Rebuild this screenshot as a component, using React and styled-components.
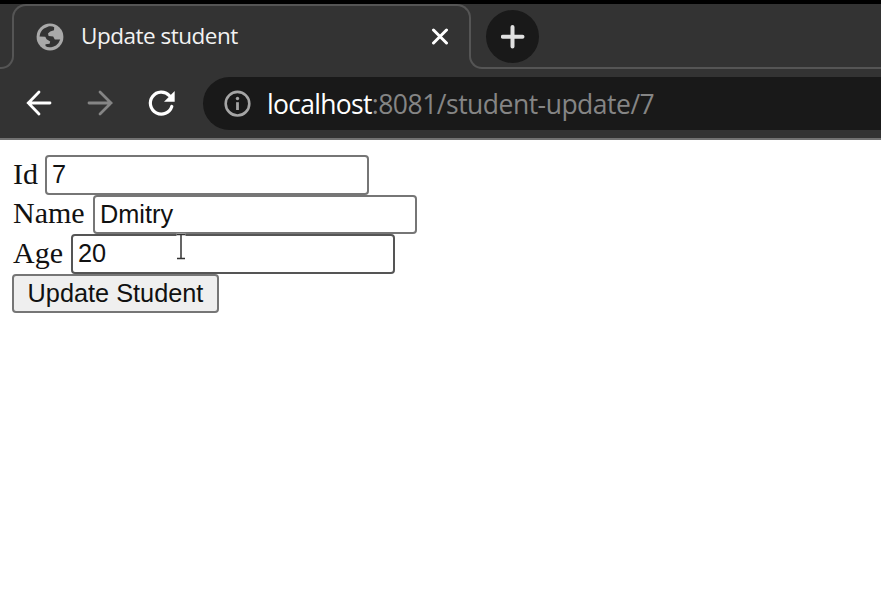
import React from "react";
import styled, { createGlobalStyle } from "styled-components";

const Global = createGlobalStyle`
  body { margin: 0; background: #fff; overflow: hidden; }
  * { box-sizing: border-box; }
`;
const Window = styled.div`
  height: 609px;
  overflow: hidden;
  border-top: 4px solid #000;
  background: #fff;
`;
const Chrome = styled.header`
  height: 136px;
  background: #333333;
  border-bottom: 2px solid #727272;
`;
const TabStrip = styled.div`
  display: flex;
  height: 65px;
`;
const StripEdge = styled.div`
  align-self: flex-end;
  height: 45px;
  border-bottom: 2px solid #555;
  ${(p) =>
    p.$side === "left"
      ? "width: 14px; border-right: 2px solid #555; border-bottom-right-radius: 13px;"
      : "flex: 1; margin-left: -2px; border-left: 2px solid #555; border-bottom-left-radius: 13px;"}
`;
const Tab = styled.div`
  display: flex;
  width: 459px;
  height: 22px;
  margin-left: -2px;
  padding: 0 20px 0 22px;
  border: 2px solid #555;
  border-bottom: 0;
  border-radius: 14px 14px 0 0;
`;
const TabContent = styled.div`
  display: flex;
  align-items: center;
  flex: 1;
  height: 61px;
`;
const TabTitle = styled.span`
  flex: 1;
  margin: -2px 0 0 17px;
  font: 22.5px/30px "Open Sans", sans-serif;
  letter-spacing: -0.5px;
  color: #f2f2f2;
  white-space: nowrap;
`;
const NewTab = styled.div`
  display: grid;
  place-items: center;
  width: 53px;
  height: 53px;
  margin: -14px 0 0 15px;
  border-radius: 50%;
  background: #191919;
`;
const Toolbar = styled.nav`
  display: flex;
  align-items: center;
  height: 69px;
  padding: 0 0 0 24px;
`;
const NavIcon = styled.svg`
  flex: none;
  width: 30px;
  height: 30px;
  margin: -2px ${(p) => p.$gap}px 0 0;
  color: ${(p) => (p.$dim ? "#858585" : "#fff")};
`;
const Address = styled.div`
  display: flex;
  align-items: center;
  flex: 1;
  height: 53px;
  padding-left: 21px;
  border-radius: 27px 0 0 27px;
  background: #191919;
  font: 26.5px/36px "Open Sans", sans-serif;
  color: #858585;
  white-space: nowrap;
`;
const Host = styled.span`
  margin-left: 16px;
  letter-spacing: -0.7px;
  color: #fff;
`;
const Path = styled.span`
  letter-spacing: -0.5px;
`;
const Form = styled.form`
  position: relative;
  padding: 15px 0 0 12px;
`;
const Row = styled.div`
  display: flex;
  align-items: center;
  height: ${(p) => p.$height}px;
`;
const Label = styled.label`
  width: ${(p) => p.$width}px;
  flex: none;
  font: 30px/34px "Liberation Serif", serif;
  color: #111;
  margin-top: -3px;
  padding-left: 1px;
`;
const Input = styled.input`
  width: 324px;
  height: 100%;
  margin: 0;
  padding: 0 5px ${(p) => (p.$low ? 0 : 2)}px;
  border: 2px solid ${(p) => (p.$hover ? "#555" : "#767676")};
  border-radius: 4px;
  background: #fff;
  outline: 0;
  font: 25.3px/30px "Liberation Sans", sans-serif;
  color: #111;
`;
const Submit = styled.button`
  width: 207px;
  height: 39px;
  padding: 0 0 1px;
  border: 2px solid #767676;
  border-radius: 4px;
  background: #efefef;
  font: 25.3px/30px "Liberation Sans", sans-serif;
  color: #111;
  white-space: nowrap;
`;
const Cursor = styled.svg`
  position: absolute;
  left: 175px;
  top: 93px;
`;

const fields = [
  { name: "Id", value: "7", label: 33, height: 40 },
  { name: "Name", value: "Dmitry", label: 81, height: 39, low: true },
  { name: "Age", value: "20", label: 59, height: 40, hover: true },
];

export default function App() {
  return (
    <Window>
      <Global />
      <Chrome>
        <TabStrip>
          <StripEdge $side="left" />
          <Tab>
            <TabContent>
              <svg width="28" height="28" viewBox="0 0 28 28">
                <circle cx="14" cy="14" r="13.4" fill="#a9a9a9" />
                <path
                  d="M13 3.3 Q16.5 2.8 18.2 4.3 L18 7.2 L14.2 8.6 L12 10.4 L12.6 13 L17.2 13.4 L18.8 16.4 L24.2 16.6 Q23.2 20 20 22.4 L17 23.8 Q12 25.2 9.5 23 L9.5 21.2 L13.6 20.8 L14.2 18.4 L10.6 16.2 L9.3 13.8 L3.6 13.4 Q4 8.4 8 5.5 Z"
                  fill="#333"
                />
              </svg>
              <TabTitle>Update student</TabTitle>
              <svg width="18" height="18" viewBox="0 0 18 18">
                <path d="M2.5 2 L15.5 15 M15.5 2 L2.5 15" stroke="#fff" strokeWidth="3" strokeLinecap="round" />
              </svg>
            </TabContent>
          </Tab>
          <StripEdge $side="right">
            <NewTab>
              <svg width="24" height="24" viewBox="0 0 24 24">
                <path d="M11.5 2V21.5M1.8 11.8H21.5" stroke="#e0e0e0" strokeWidth="4" strokeLinecap="round" />
              </svg>
            </NewTab>
          </StripEdge>
        </TabStrip>
        <Toolbar>
          <NavIcon $gap={31} viewBox="0 0 30 30" fill="none" stroke="currentColor" strokeWidth="2.8" strokeLinecap="round">
            <path d="M26 15H4.3M15 4L4.3 15L15 26" />
          </NavIcon>
          <NavIcon $gap={31} $dim viewBox="0 0 30 30" fill="none" stroke="currentColor" strokeWidth="2.8" strokeLinecap="round">
            <path d="M4 15H26M15 4L26 15L15 26" />
          </NavIcon>
          <NavIcon $gap={27} viewBox="0 0 30 30">
            <path
              d="M25.8 18.5A11 11 0 1 1 23.4 7.6"
              fill="none"
              stroke="currentColor"
              strokeWidth="3.2"
              strokeLinecap="round"
            />
            <path d="M28.7 3V13.8H18Z" fill="currentColor" />
          </NavIcon>
          <Address>
            <svg width="27" height="27" viewBox="0 0 27 27">
              <circle cx="13.5" cy="13.7" r="11.8" fill="none" stroke="#a5a5a5" strokeWidth="2.6" />
              <path d="M13.5 12.2V20" stroke="#a5a5a5" strokeWidth="2.8" />
              <circle cx="13.5" cy="8.5" r="1.7" fill="#a5a5a5" />
            </svg>
            <Host>localhost</Host>
            <Path>:8081/student-update/7</Path>
          </Address>
        </Toolbar>
      </Chrome>
      <Form>
        {fields.map((f) => (
          <Row key={f.name} $height={f.height}>
            <Label $width={f.label} htmlFor={f.name}>{f.name}</Label>
            <Input id={f.name} defaultValue={f.value} $hover={f.hover} $low={f.low} />
          </Row>
        ))}
        <Submit type="button">Update Student</Submit>
        <Cursor width="12" height="28" viewBox="0 0 12 28">
          <path d="M1.5 2H10.5M6 2V25M2 25.5H10" fill="none" stroke="#fff" strokeWidth="3" />
          <path d="M1.5 1.5H10.5M6 1.5V25.5M2 25.5H10" fill="none" stroke="#333" strokeWidth="1.5" />
        </Cursor>
      </Form>
    </Window>
  );
}
